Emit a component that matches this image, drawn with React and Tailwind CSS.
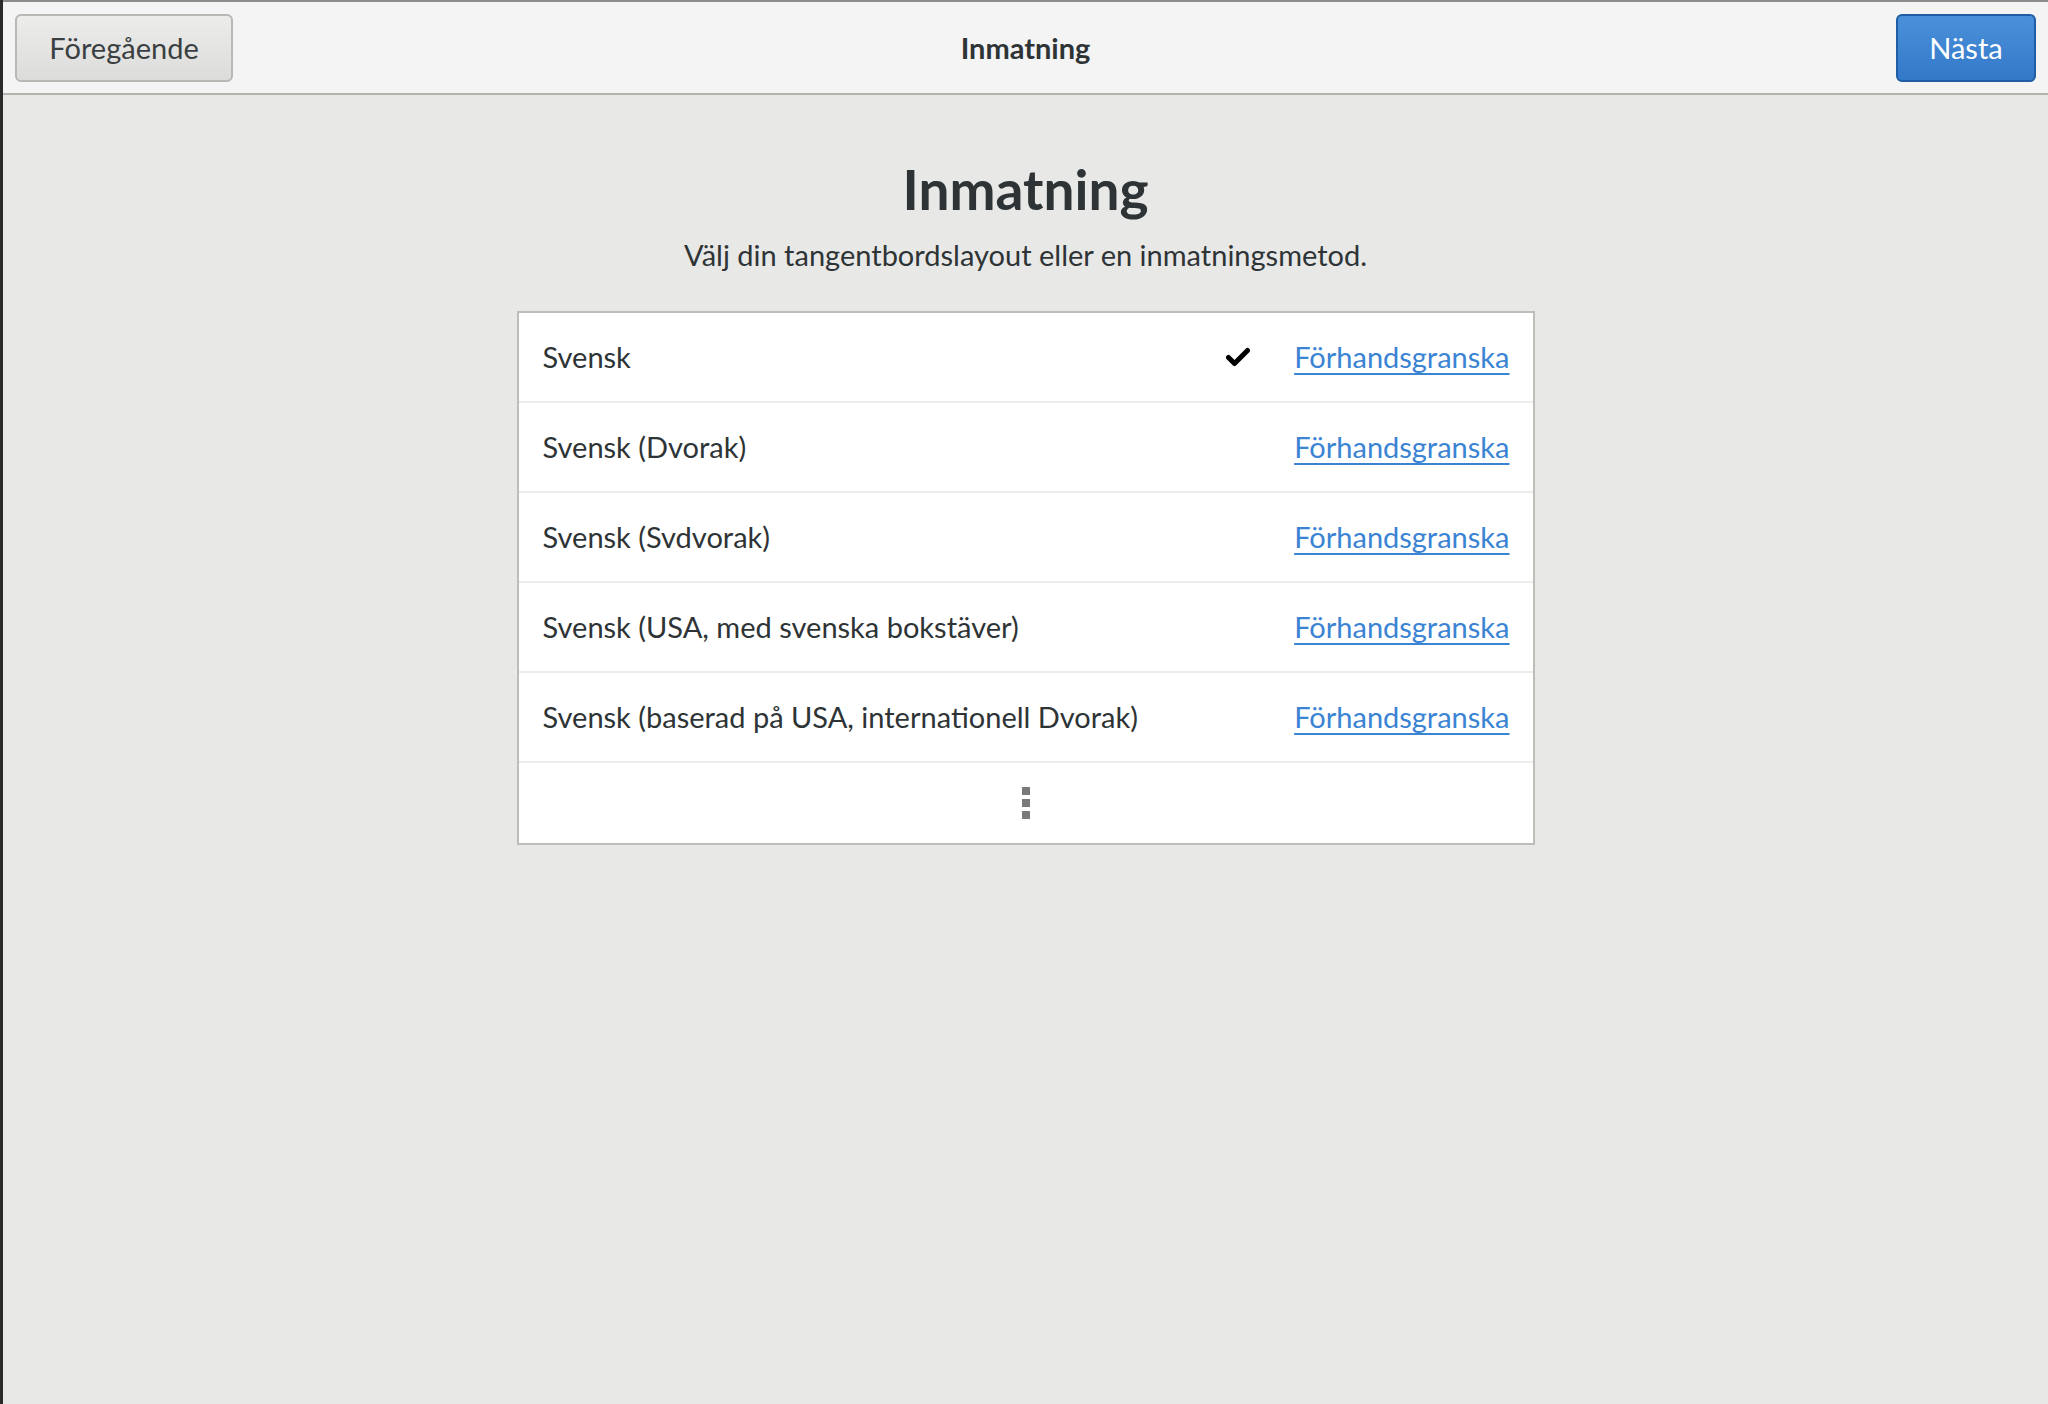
import React from 'react';

const layouts = [
  { name: 'Svensk', active: true },
  { name: 'Svensk (Dvorak)' },
  { name: 'Svensk (Svdvorak)' },
  { name: 'Svensk (USA, med svenska bokstäver)' },
  { name: 'Svensk (baserad på USA, internationell Dvorak)' },
];

function Check() {
  return (
    <svg width="24" height="20" viewBox="0 0 24 20" className="shrink-0">
      <path d="M2.5 10.5 L8.5 16.5 L21.5 3.5" fill="none" stroke="#000" strokeWidth="5" strokeLinecap="round" strokeLinejoin="round" />
    </svg>
  );
}

function Row({ name, active }) {
  return (
    <div className="h-[90px] flex items-center pl-[24px] pr-[23px] border-b-2 border-[#ececeb]">
      <span className="flex-1">{name}</span>
      {active && <span className="mr-[44px] flex items-center"><Check /></span>}
      <a href="#" className="text-[#3b83d3] underline underline-offset-[5px] decoration-[2px]">Förhandsgranska</a>
    </div>
  );
}

export default function App() {
  return (
    <div
      className="min-h-screen h-[1404px] flex flex-col bg-[#e8e8e7] border-l-[3px] border-[#2a2a2a] text-[#2e3436] text-[29px]"
      style={{ fontFamily: 'Lato, "Noto Sans", sans-serif' }}
    >
      <header className="h-[95px] shrink-0 grid grid-cols-[1fr_auto_1fr] items-center px-[12px] bg-[#f4f4f4] border-t-2 border-t-[#8c8c8c] border-b-2 border-b-[#b3b3b0]">
        <div>
          <button className="h-[68px] w-[218px] rounded-[6px] border-2 border-[#b8b8b5] bg-gradient-to-b from-[#ececeb] to-[#dcdcda] text-[#3a3f41]">
            Föregående
          </button>
        </div>
        <div className="font-bold">Inmatning</div>
        <div className="flex justify-end">
          <button className="h-[68px] w-[140px] rounded-[6px] border-2 border-[#1f5ea6] bg-gradient-to-b from-[#4a90d9] to-[#3379c9] text-white">
            Nästa
          </button>
        </div>
      </header>

      <main className="flex flex-col items-center">
        <h1 className="mt-[59px] text-[55px] font-bold leading-[70px]">Inmatning</h1>
        <p className="mt-[13px] leading-[36px]">Välj din tangentbordslayout eller en inmatningsmetod.</p>

        <div className="mt-[38px] w-[1018px] bg-white border-2 border-[#bdbdba]">
          {layouts.map((l) => (
            <Row key={l.name} {...l} />
          ))}
          <div className="h-[80px] flex flex-col items-center justify-center gap-[4px]">
            <span className="w-[8px] h-[8px] bg-[#7a7a7a]" />
            <span className="w-[8px] h-[8px] bg-[#7a7a7a]" />
            <span className="w-[8px] h-[8px] bg-[#7a7a7a]" />
          </div>
        </div>
      </main>
    </div>
  );
}
